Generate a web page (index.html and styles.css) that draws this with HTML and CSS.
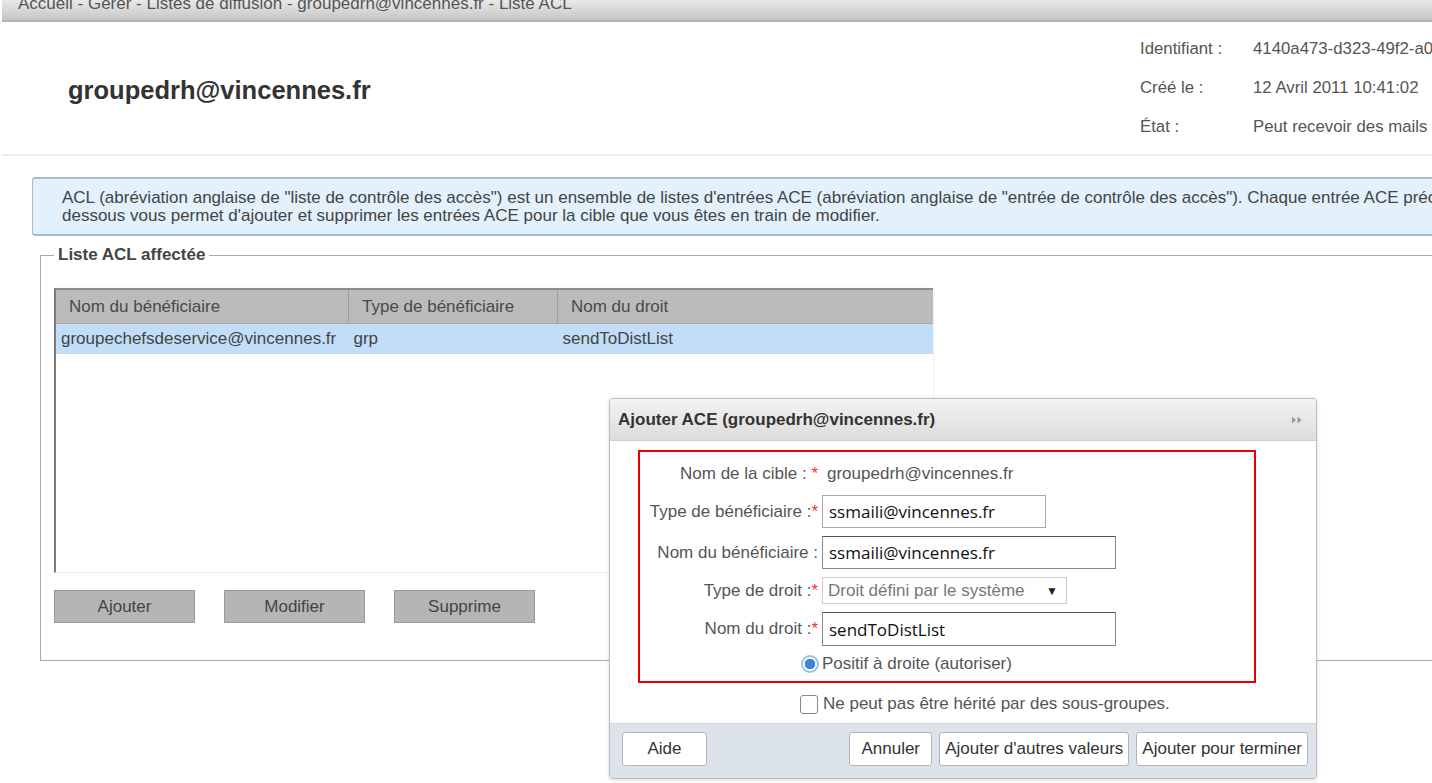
FILE: index.html
```html
<!DOCTYPE html>
<html lang="fr">
<head>
  <meta charset="UTF-8" />
  <title>Liste ACL</title>
  <link rel="stylesheet" href="styles.css">
</head>
<body>

  <div class="crumbs"><span>Accueil - Gérer - Listes de diffusion - groupedrh@vincennes.fr - Liste ACL</span></div>

  <div class="head">
    <h1 class="title">groupedrh@vincennes.fr</h1>
    <div class="meta">
      <span>Identifiant :</span><span>4140a473-d323-49f2-a0c6-7e1a52b9f0d3</span>
      <span>Créé le :</span><span>12 Avril 2011 10:41:02</span>
      <span>État :</span><span>Peut recevoir des mails</span>
    </div>
  </div>

  <div class="info">
    ACL (abréviation anglaise de "liste de contrôle des accès") est un ensemble de listes d'entrées ACE (abréviation anglaise de "entrée de contrôle des accès"). Chaque entrée ACE précise un droit accordé à un bénéficiaire. La liste ci-<br>
    dessous vous permet d'ajouter et supprimer les entrées ACE pour la cible que vous êtes en train de modifier.
  </div>

  <fieldset class="acl">
    <legend>Liste ACL affectée</legend>
    <div class="grid">
      <table>
        <thead>
          <tr>
            <th class="c1">Nom du bénéficiaire</th>
            <th class="c2">Type de bénéficiaire</th>
            <th class="c3">Nom du droit</th>
          </tr>
        </thead>
        <tbody>
          <tr class="sel">
            <td>groupechefsdeservice@vincennes.fr</td>
            <td>grp</td>
            <td>sendToDistList</td>
          </tr>
        </tbody>
      </table>
    </div>
    <div class="actions">
      <button class="gray">Ajouter</button>
      <button class="gray">Modifier</button>
      <button class="gray">Supprime</button>
    </div>
  </fieldset>

  <div class="dialog">
    <div class="dlg-head">
      <span>Ajouter ACE (groupedrh@vincennes.fr)</span>
      <svg width="12" height="10" viewBox="0 0 12 10"><path d="M1 1.5 L5 5 L1 8.5 Z M6.5 1.5 L10.5 5 L6.5 8.5 Z" fill="#999"/></svg>
    </div>
    <div class="dlg-body">
      <div class="form-box">
        <label>Nom de la cible : <em>*</em></label>
        <span class="static">groupedrh@vincennes.fr</span>

        <label>Type de bénéficiaire :<em>*</em></label>
        <input class="short" type="text" value="ssmaili@vincennes.fr">

        <label>Nom du bénéficiaire :</label>
        <input type="text" value="ssmaili@vincennes.fr">

        <label>Type de droit :<em>*</em></label>
        <div class="select"><span>Droit défini par le système</span><i>&#9660;</i></div>

        <label>Nom du droit :<em>*</em></label>
        <input class="tall" type="text" value="sendToDistList">

        <span class="radio"></span>
        <span class="opt">Positif à droite (autoriser)</span>
      </div>
      <div class="check-row">
        <span class="box"></span>
        <span class="opt">Ne peut pas être hérité par des sous-groupes.</span>
      </div>
    </div>
    <div class="dlg-foot">
      <button class="white">Aide</button>
      <div class="right">
        <button class="white">Annuler</button>
        <button class="white">Ajouter d'autres valeurs</button>
        <button class="white">Ajouter pour terminer</button>
      </div>
    </div>
  </div>

</body>
</html>
```

FILE: styles.css
```css
html, body {
  overflow: hidden;
}
body {
  margin: 0;
  height: 783px;
  position: relative;
  font-family: "Liberation Sans", Arial, sans-serif;
  font-size: 17px;
  color: #4a4a4a;
  background: #fff;
}
.crumbs {
  height: 20px;
  margin-left: 2px;
  overflow: hidden;
  background: linear-gradient(#e9e9e9, #c6c6c6);
  border-bottom: 2px solid #b4b4b4;
  color: #555;
  font-size: 17px;
  line-height: 17px;
}
.crumbs span {
  display: block;
  margin: -5px 0 0 16px;
  white-space: nowrap;
}
.head {
  display: grid;
  grid-template-columns: 1072px auto;
  align-items: center;
  height: 132px;
  padding-left: 66px;
  border-bottom: 2px solid #ececec;
  margin-left: 2px;
}
.title {
  margin: 4px 0 0 0;
  font-size: 25.5px;
  color: #333;
  white-space: nowrap;
}
.meta {
  display: grid;
  grid-template-columns: 113px auto;
  grid-auto-rows: 39px;
  align-items: center;
  white-space: nowrap;
  color: #555;
  font-size: 16.8px;
}
.info {
  margin: 21px -30px 0 32px;
  padding: 10px 0 9px 29px;
  background: #e2f1fc;
  border: 1px solid #a9bccb;
  border-width: 2px 1px 2px 1px;
  border-radius: 3px;
  line-height: 18px;
  font-size: 17px;
  color: #444;
  white-space: nowrap;
}
.acl {
  margin: 9px -40px 0 40px;
  padding: 0 14px 37px 13px;
  border: 1px solid #aaa;
}
.acl legend {
  padding: 0 4px;
  font-weight: bold;
  color: #444;
  font-size: 17px;
}
.grid {
  width: 877px;
  height: 282px;
  margin-top: 23px;
  border-top: 2px solid #8c8c8c;
  border-left: 2px solid #7a7a7a;
  border-bottom: 1px solid #eee;
  box-shadow: 1px 0 2px #eee;
}
.grid table {
  width: 100%;
  border-collapse: collapse;
}
.grid th {
  height: 33px;
  padding: 0 0 0 13px;
  background: #bbb;
  border-right: 1px solid #9c9c9c;
  border-bottom: 1px solid #a9a9a9;
  text-align: left;
  font-weight: normal;
  color: #4a4a4a;
}
.grid th:last-child {
  border-right: none;
}
.grid .c1 { width: 279px; }
.grid .c2 { width: 195px; }
.grid td {
  height: 30px;
  padding: 0 0 0 5px;
  color: #444;
}
.grid .sel td {
  background: #c2ddf7;
}
.actions {
  display: flex;
  gap: 29px;
  margin-top: 17px;
}
button {
  font-family: "Liberation Sans", Arial, sans-serif;
  cursor: pointer;
}
.gray {
  width: 141px;
  height: 33px;
  background: #b5b5b5;
  border: 1px solid #999;
  color: #444;
  font-size: 17px;
}
.dialog {
  position: absolute;
  left: 609px;
  top: 398px;
  width: 706px;
  height: 379px;
  border: 1px solid #bdbdbd;
  border-radius: 4px;
  background: #fff;
  box-shadow: 0 1px 4px rgba(0, 0, 0, 0.15);
  overflow: hidden;
}
.dlg-head {
  display: flex;
  align-items: center;
  justify-content: space-between;
  height: 41px;
  padding: 0 13px 0 8px;
  background: linear-gradient(#f3f3f3, #dcdcdc);
  border-bottom: 1px solid #d0d0d0;
  font-weight: bold;
  color: #333;
  font-size: 17px;
}
.dlg-body {
  height: 273px;
  padding: 9px 0 0 28px;
}
.form-box {
  display: grid;
  grid-template-columns: 178px 300px;
  grid-template-rows: 26px 33px 33px 27px 34px 20px;
  row-gap: 8px;
  column-gap: 4px;
  align-items: center;
  width: 614px;
  padding: 9px 0 7px 0;
  border: 2px solid #e60000;
  color: #555;
  font-size: 17px;
}
.form-box label {
  text-align: right;
  white-space: nowrap;
}
.form-box em {
  font-style: normal;
  color: #e33;
}
.static {
  padding-left: 5px;
}
.form-box input {
  box-sizing: border-box;
  width: 294px;
  height: 33px;
  padding: 0 6px;
  border: 1px solid #888;
  border-top-color: #555;
  font-family: "Open Sans", sans-serif;
  font-size: 17px;
  color: #111;
}
.form-box input.short {
  width: 224px;
  border-color: #aaa;
}
.form-box input.tall {
  height: 34px;
}
.select {
  box-sizing: border-box;
  display: flex;
  align-items: center;
  justify-content: space-between;
  width: 245px;
  height: 27px;
  padding: 0 8px 0 5px;
  border: 1px solid #ccc;
  color: #777;
  font-size: 17px;
}
.select i {
  font-style: normal;
  font-size: 12px;
  color: #222;
}
.radio {
  justify-self: end;
  box-sizing: border-box;
  width: 18px;
  height: 18px;
  margin-right: -1px;
  border: 2px solid #9cc0e8;
  border-radius: 50%;
  background: radial-gradient(circle, #3a86d8 0 5px, #fff 5.5px);
}
.opt {
  white-space: nowrap;
}
.check-row {
  display: flex;
  align-items: center;
  gap: 5px;
  margin: 11px 0 0 162px;
  color: #555;
  font-size: 17px;
}
.box {
  box-sizing: border-box;
  width: 18px;
  height: 19px;
  border: 1px solid #888;
  border-radius: 3px;
  background: #fff;
}
.dlg-foot {
  display: flex;
  justify-content: space-between;
  height: 47px;
  padding: 8px 8px 0 12px;
  background: #dde3ea;
  border-top: 1px solid #d3d9e0;
}
.right {
  display: flex;
  gap: 7px;
}
.white {
  height: 34px;
  padding: 0 5px;
  background: #fff;
  border: 1px solid #b5b5b5;
  border-radius: 3px;
  color: #333;
  font-size: 17px;
}
.dlg-foot > .white {
  width: 85px;
}
.right .white:first-child {
  width: 83px;
}
```
